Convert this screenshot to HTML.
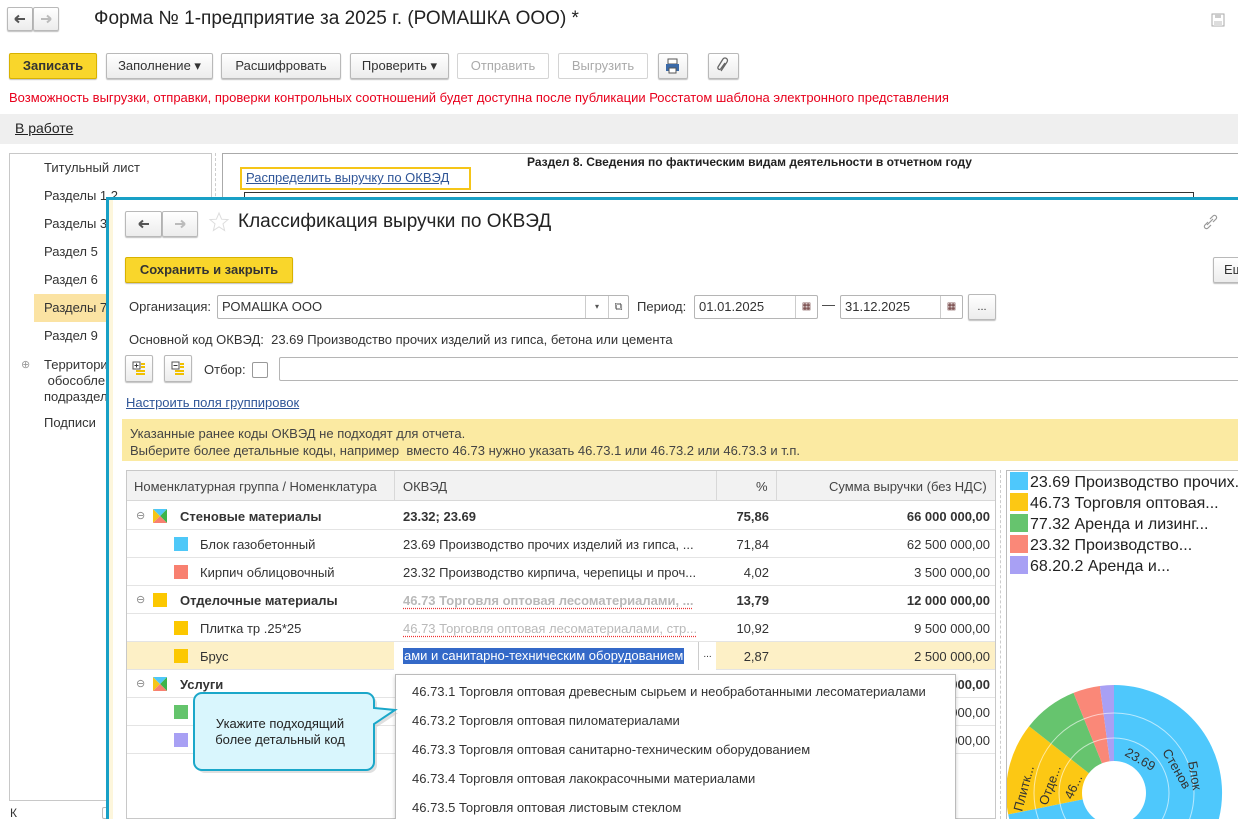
<!DOCTYPE html>
<html><head><meta charset="utf-8"><style>
*{box-sizing:border-box;margin:0;padding:0}
html,body{width:1238px;height:819px;overflow:hidden}
body{background:#fff;font-family:"Liberation Sans",Arial,sans-serif;font-size:13px;color:#333;position:relative}
.a{position:absolute;white-space:nowrap}
.btn{position:absolute;border:1px solid #b9b9b9;border-radius:2px;background:linear-gradient(#fff,#ececec);box-shadow:0 1px 1px rgba(0,0,0,.25);text-align:center;color:#333;font-size:13px}
.dis{color:#aaa;border-color:#d4d4d4;box-shadow:none;background:#fff}
.yb{background:#f9d62b;border-color:#d8b200;font-weight:bold}
.inp{position:absolute;border:1px solid #b5b5b5;border-radius:2px;background:#fff;height:24px;padding:3px 4px}
.row{position:absolute;left:127px;width:868px;height:28px;border-bottom:1px solid #e4e4e4}
.sq{position:absolute;width:14px;height:14px}
.r{text-align:right}
.b{font-weight:bold}
.gr{color:#b9b9b9;font-weight:bold;text-decoration:underline dotted #e33;text-underline-offset:3px}
</style></head><body>

<svg width="0" height="0" style="position:absolute"><defs>
<g id="la"><path d="M3 6 H13 M3 6 L7 2.5 M3 6 L7 9.5" fill="none" stroke-width="2"/></g>
<g id="ra"><path d="M13 6 H3 M13 6 L9 2.5 M13 6 L9 9.5" fill="none" stroke-width="2"/></g>
<g id="mix"><polygon points="0,0 7,7 0,14" fill="#f5c518"/><polygon points="14,0 7,7 14,14" fill="#3cb44b"/><polygon points="0,0 14,0 7,7" fill="#4ec8f8"/><polygon points="0,14 14,14 7,7" fill="#f88070"/></g>
</defs></svg>

<!-- title row -->
<div class="btn" style="left:7px;top:7px;width:26px;height:24px"><svg width="24" height="22"><use href="#la" stroke="#555" transform="translate(4,5)"/></svg></div>
<div class="btn" style="left:33px;top:7px;width:26px;height:24px"><svg width="24" height="22"><use href="#ra" stroke="#bbb" transform="translate(4,5)"/></svg></div>
<div class="a" style="left:94px;top:8px;font-size:19px;color:#222">Форма № 1-предприятие за 2025 г. (РОМАШКА ООО) *</div>
<svg class="a" style="left:1211px;top:13px" width="14" height="14"><rect x="1" y="1" width="12" height="12" fill="none" stroke="#aaa"/><rect x="4" y="1" width="6" height="4" fill="#ccc"/><rect x="3" y="8" width="8" height="5" fill="#ddd"/></svg>

<!-- toolbar -->
<div class="btn yb" style="left:9px;top:53px;width:88px;height:26px;line-height:24px">Записать</div>
<div class="btn" style="left:106px;top:53px;width:107px;height:26px;line-height:24px">Заполнение ▾</div>
<div class="btn" style="left:221px;top:53px;width:120px;height:26px;line-height:24px">Расшифровать</div>
<div class="btn" style="left:350px;top:53px;width:99px;height:26px;line-height:24px">Проверить ▾</div>
<div class="btn dis" style="left:457px;top:53px;width:92px;height:26px;line-height:24px">Отправить</div>
<div class="btn dis" style="left:558px;top:53px;width:90px;height:26px;line-height:24px">Выгрузить</div>
<div class="btn" style="left:658px;top:53px;width:30px;height:26px"><svg width="28" height="24"><rect x="9" y="5" width="9" height="5" fill="#fff" stroke="#555"/><rect x="7" y="10" width="13" height="7" fill="#3b6aa8"/><rect x="10" y="14" width="7" height="5" fill="#fff" stroke="#555"/></svg></div>
<div class="btn" style="left:708px;top:53px;width:31px;height:26px"><svg width="29" height="24"><path d="M12 17 L18 8 a2.5 2.5 0 0 0 -4 -3 L9 13 a1.5 1.5 0 0 0 3 1.5 L16 9" fill="none" stroke="#666" stroke-width="1.3"/></svg></div>

<div class="a" style="left:9px;top:90px;color:#e8001c;font-size:13px">Возможность выгрузки, отправки, проверки контрольных соотношений будет доступна после публикации Росстатом шаблона электронного представления</div>
<div class="a" style="left:0;top:114px;width:1238px;height:30px;background:#efefef"></div>
<div class="a" style="left:15px;top:120px;font-size:14px;color:#222;text-decoration:underline">В работе</div>

<!-- left panel -->
<div class="a" style="left:9px;top:153px;width:203px;height:648px;border:1px solid #c8c8c8;background:#fff"></div>
<div class="a" style="left:34px;top:294px;width:80px;height:28px;background:#fbe3a3"></div>
<div class="a" style="left:44px;top:154px;font-size:13px;line-height:28px;color:#333">Титульный лист<br>Разделы 1,2<br>Разделы 3<br>Раздел 5<br>Раздел 6<br>Разделы 7<br>Раздел 9</div>
<div class="a" style="left:21px;top:358px;color:#999;font-size:11px">⊕</div>
<div class="a" style="left:44px;top:357px;line-height:16px">Территори<br>&nbsp;обособле<br>подраздел</div>
<div class="a" style="left:44px;top:415px">Подписи</div>
<div class="a" style="left:215px;top:153px;height:660px;border-left:1px dashed #ccc"></div>
<div class="a" style="left:10px;top:806px;font-size:12px">К</div>
<div class="a" style="left:102px;top:807px;width:8px;height:12px;border:1px solid #bbb;border-radius:2px"></div>

<!-- background form -->
<div class="a" style="left:222px;top:153px;width:1016px;height:666px;border-top:1px solid #aaa;border-left:1px solid #aaa"></div>
<div class="a b" style="left:527px;top:155px;font-size:12px;color:#222">Раздел 8. Сведения по фактическим видам деятельности в отчетном году</div>
<div class="a" style="left:240px;top:167px;width:231px;height:23px;border:2px solid #f5c518"></div>
<div class="a" style="left:246px;top:170px;color:#2f5597;text-decoration:underline">Распределить выручку по ОКВЭД</div>
<div class="a" style="left:244px;top:192px;width:950px;height:8px;border:1px solid #333"></div>

<!-- modal -->
<div class="a" style="left:106px;top:197px;width:1132px;height:622px;border-top:3px solid #18a0c6;border-left:3px solid #18a0c6;background:#fff"></div>
<div class="a" style="left:109px;top:200px;width:4px;height:619px;background:#fdf6dc"></div>
<div class="btn" style="left:125px;top:211px;width:37px;height:26px"><svg width="35" height="24"><use href="#la" stroke="#555" transform="translate(10,6)"/></svg></div>
<div class="btn" style="left:162px;top:211px;width:36px;height:26px"><svg width="34" height="24"><use href="#ra" stroke="#bbb" transform="translate(9,6)"/></svg></div>
<svg class="a" style="left:208px;top:211px" width="22" height="22"><path d="M11 2 L13.6 8.2 L20 8.6 L15 12.8 L16.6 19.5 L11 15.8 L5.4 19.5 L7 12.8 L2 8.6 L8.4 8.2 Z" fill="none" stroke="#ddd"/></svg>
<div class="a" style="left:238px;top:211px;font-size:19px;color:#222">Классификация выручки по ОКВЭД</div>
<svg class="a" style="left:1202px;top:214px" width="16" height="16"><path d="M5 11 L11 5 M6 8 L3 11 a2 2 0 0 0 3 3 L9 11 M8 5 L11 2 a2 2 0 0 1 3 3 L11 8" fill="none" stroke="#999" stroke-width="1.2"/></svg>

<div class="btn yb" style="left:125px;top:257px;width:168px;height:26px;line-height:24px">Сохранить и закрыть</div>
<div class="btn" style="left:1213px;top:257px;width:30px;height:26px;line-height:24px;text-align:left;padding-left:10px">Ещ</div>

<div class="a" style="left:129px;top:299px">Организация:</div>
<div class="inp" style="left:217px;top:295px;width:412px">РОМАШКА ООО</div>
<div class="a" style="left:585px;top:296px;height:22px;border-left:1px solid #ccc;width:23px;text-align:center;font-size:8px;line-height:22px;color:#555">▾</div>
<div class="a" style="left:608px;top:296px;height:22px;border-left:1px solid #ccc;width:20px;text-align:center;font-size:11px;line-height:22px;color:#555">⧉</div>
<div class="a" style="left:637px;top:299px">Период:</div>
<div class="inp" style="left:694px;top:295px;width:124px">01.01.2025</div>
<div class="a" style="left:795px;top:296px;height:22px;border-left:1px solid #ccc;width:22px;text-align:center;line-height:22px;font-size:10px;color:#633">▦</div>
<div class="a" style="left:822px;top:297px">—</div>
<div class="inp" style="left:840px;top:295px;width:123px">31.12.2025</div>
<div class="a" style="left:940px;top:296px;height:22px;border-left:1px solid #ccc;width:22px;text-align:center;line-height:22px;font-size:10px;color:#633">▦</div>
<div class="btn" style="left:968px;top:294px;width:28px;height:26px;line-height:24px;font-size:11px">...</div>

<div class="a" style="left:129px;top:332px">Основной код ОКВЭД:&nbsp; 23.69 Производство прочих изделий из гипса, бетона или цемента</div>

<div class="btn" style="left:125px;top:355px;width:28px;height:27px"><svg width="26" height="25"><rect x="7" y="6" width="7" height="7" fill="#fff" stroke="#555"/><path d="M8.5 9.5h4M10.5 7.5v4" stroke="#333"/><path d="M15 8h4M15 11h4M10 15h9M10 18h9" stroke="#f0c000" stroke-width="2"/></svg></div>
<div class="btn" style="left:164px;top:355px;width:28px;height:27px"><svg width="26" height="25"><rect x="7" y="6" width="7" height="7" fill="#fff" stroke="#555"/><path d="M8.5 9.5h4" stroke="#333"/><path d="M15 8h4M15 11h4M10 15h9M10 18h9" stroke="#f0c000" stroke-width="2"/></svg></div>
<div class="a" style="left:204px;top:362px">Отбор:</div>
<div class="a" style="left:252px;top:362px;width:16px;height:16px;border:1px solid #999;border-radius:2px"></div>
<div class="inp" style="left:279px;top:357px;width:970px"></div>

<div class="a" style="left:126px;top:395px;color:#2f5597;text-decoration:underline">Настроить поля группировок</div>

<div class="a" style="left:122px;top:419px;width:1116px;height:42px;background:#fbeaa2"></div>
<div class="a" style="left:130px;top:425px;line-height:17px;color:#444">Указанные ранее коды ОКВЭД не подходят для отчета.<br>Выберите более детальные коды, например&nbsp; вместо 46.73 нужно указать 46.73.1 или 46.73.2 или 46.73.3 и т.п.</div>

<!-- table -->
<div class="a" style="left:126px;top:470px;width:870px;height:349px;border:1px solid #c8c8c8"></div>
<div class="a" style="left:127px;top:471px;width:868px;height:30px;background:#f2f2f2;border-bottom:1px solid #d8d8d8"></div>
<div class="a" style="left:394px;top:471px;height:30px;border-left:1px solid #d8d8d8"></div>
<div class="a" style="left:716px;top:471px;height:30px;border-left:1px solid #d8d8d8"></div>
<div class="a" style="left:776px;top:471px;height:30px;border-left:1px solid #d8d8d8"></div>
<div class="a" style="left:134px;top:479px;color:#444">Номенклатурная группа / Номенклатура</div>
<div class="a" style="left:403px;top:479px;color:#444">ОКВЭД</div>
<div class="a" style="left:756px;top:479px;color:#444">%</div>
<div class="a" style="left:829px;top:479px;color:#444">Сумма выручки (без НДС)</div>

<div class="row" style="top:502px"></div>
<div class="a" style="left:136px;top:509px;color:#888;font-size:11px">⊖</div>
<svg class="a" style="left:153px;top:509px" width="14" height="14"><use href="#mix"/></svg>
<div class="a b" style="left:180px;top:509px;color:#333">Стеновые материалы</div>
<div class="a b" style="left:403px;top:509px">23.32; 23.69</div>
<div class="a b r" style="left:716px;top:509px;width:53px">75,86</div>
<div class="a b r" style="left:776px;top:509px;width:214px">66 000 000,00</div>

<div class="row" style="top:530px"></div>
<div class="sq" style="left:174px;top:537px;background:#4ec8f8"></div>
<div class="a" style="left:200px;top:537px">Блок газобетонный</div>
<div class="a" style="left:403px;top:537px">23.69 Производство прочих изделий из гипса, ...</div>
<div class="a r" style="left:716px;top:537px;width:53px">71,84</div>
<div class="a r" style="left:776px;top:537px;width:214px">62 500 000,00</div>

<div class="row" style="top:558px"></div>
<div class="sq" style="left:174px;top:565px;background:#f88070"></div>
<div class="a" style="left:200px;top:565px">Кирпич облицовочный</div>
<div class="a" style="left:403px;top:565px">23.32 Производство кирпича, черепицы и проч...</div>
<div class="a r" style="left:716px;top:565px;width:53px">4,02</div>
<div class="a r" style="left:776px;top:565px;width:214px">3 500 000,00</div>

<div class="row" style="top:586px"></div>
<div class="a" style="left:136px;top:593px;color:#888;font-size:11px">⊖</div>
<div class="sq" style="left:153px;top:593px;background:#fcc800"></div>
<div class="a b" style="left:180px;top:593px">Отделочные материалы</div>
<div class="a gr" style="left:403px;top:593px">46.73 Торговля оптовая лесоматериалами, ...</div>
<div class="a b r" style="left:716px;top:593px;width:53px">13,79</div>
<div class="a b r" style="left:776px;top:593px;width:214px">12 000 000,00</div>

<div class="row" style="top:614px"></div>
<div class="sq" style="left:174px;top:621px;background:#fcc800"></div>
<div class="a" style="left:200px;top:621px">Плитка тр .25*25</div>
<div class="a gr" style="left:403px;top:621px;font-weight:normal">46.73 Торговля оптовая лесоматериалами, стр...</div>
<div class="a r" style="left:716px;top:621px;width:53px">10,92</div>
<div class="a r" style="left:776px;top:621px;width:214px">9 500 000,00</div>

<div class="row" style="top:642px;background:#fdf0c6"></div>
<div class="a" style="left:394px;top:642px;width:322px;height:28px;background:#fff"></div>
<div class="sq" style="left:174px;top:649px;background:#fcc800"></div>
<div class="a" style="left:200px;top:649px">Брус</div>
<div class="a" style="left:403px;top:648px;background:#3469c8;color:#fff;padding:0 1px;line-height:16px">ами и санитарно-техническим оборудованием</div>
<div class="a" style="left:698px;top:642px;height:28px;border-left:1px solid #ccc;width:18px;text-align:center;line-height:26px;font-size:10px">...</div>
<div class="a r" style="left:716px;top:649px;width:53px">2,87</div>
<div class="a r" style="left:776px;top:649px;width:214px">2 500 000,00</div>

<div class="row" style="top:670px"></div>
<div class="a" style="left:136px;top:677px;color:#888;font-size:11px">⊖</div>
<svg class="a" style="left:153px;top:677px" width="14" height="14"><use href="#mix"/></svg>
<div class="a b" style="left:180px;top:677px">Услуги</div>
<div class="a b r" style="left:776px;top:677px;width:214px">66 000 000,00</div>

<div class="row" style="top:698px"></div>
<div class="sq" style="left:174px;top:705px;background:#64c46c"></div>
<div class="a r" style="left:776px;top:705px;width:214px">3 000 000,00</div>
<div class="row" style="top:726px"></div>
<div class="sq" style="left:174px;top:733px;background:#a8a0f4"></div>
<div class="a r" style="left:776px;top:733px;width:214px">2 000 000,00</div>

<!-- dropdown -->
<div class="a" style="left:395px;top:674px;width:561px;height:145px;background:#fff;border:1px solid #bbb;border-bottom:none;box-shadow:0 2px 4px rgba(0,0,0,.2);overflow:hidden">
<div style="position:absolute;left:16px;top:2px;line-height:29px;color:#333;white-space:nowrap">46.73.1 Торговля оптовая древесным сырьем и необработанными лесоматериалами<br>46.73.2 Торговля оптовая пиломатериалами<br>46.73.3 Торговля оптовая санитарно-техническим оборудованием<br>46.73.4 Торговля оптовая лакокрасочными материалами<br>46.73.5 Торговля оптовая листовым стеклом</div>
</div>

<!-- callout -->
<svg class="a" style="left:188px;top:688px" width="212" height="92">
<path d="M14 5 H178 a8 8 0 0 1 8 8 V20 L207 22 L186 36 V74 a8 8 0 0 1 -8 8 H14 a8 8 0 0 1 -8 -8 V13 a8 8 0 0 1 8 -8 Z" fill="#c0c0c0" opacity=".5" transform="translate(3,3)"/>
<path d="M14 5 H178 a8 8 0 0 1 8 8 V20 L207 22 L186 36 V74 a8 8 0 0 1 -8 8 H14 a8 8 0 0 1 -8 -8 V13 a8 8 0 0 1 8 -8 Z" fill="#d9f6fd" stroke="#1aa7c9" stroke-width="2"/>
</svg>
<div class="a" style="left:194px;top:716px;width:172px;text-align:center;line-height:16px;font-size:13px;color:#222">Укажите подходящий<br>более детальный код</div>

<!-- chart panel -->
<div class="a" style="left:1000px;top:470px;height:349px;border-left:1px dashed #ccc"></div>
<div class="a" style="left:1006px;top:470px;width:232px;height:349px;border:1px solid #bbb;border-right:none;border-bottom:none;overflow:hidden;background:#fff">
<svg width="240" height="349" style="position:absolute;left:0;top:0">
<g transform="translate(-1007,-471)">
<path d="M1114 793 L1114 685 A108 108 0 1 1 1008.2 814.4 Z" fill="#4ec8fc"/>
<path d="M1114 793 L1008.2 814.4 A108 108 0 0 1 1029.1 726.2 Z" fill="#fcc814"/>
<path d="M1114 793 L1029.1 726.2 A108 108 0 0 1 1073.5 692.9 Z" fill="#66c46e"/>
<path d="M1114 793 L1073.5 692.9 A108 108 0 0 1 1099.9 686 Z" fill="#fa8878"/>
<path d="M1114 793 L1099.9 686 A108 108 0 0 1 1114 685 Z" fill="#a8a0f4"/>
<circle cx="1114" cy="793" r="55" fill="none" stroke="#fff" stroke-opacity=".6"/>
<circle cx="1114" cy="793" r="80" fill="none" stroke="#fff" stroke-opacity=".6"/>
<circle cx="1114" cy="793" r="32" fill="#fff"/>
<text x="1124" y="755" font-size="13" fill="#333" transform="rotate(30 1124 755)">23.69</text>
<text x="1162" y="752" font-size="13" fill="#333" transform="rotate(60 1162 752)">Стенов</text>
<text x="1188" y="762" font-size="13" fill="#333" transform="rotate(80 1188 762)">Блок</text>
<text x="1022" y="812" font-size="13" fill="#333" transform="rotate(-75 1022 812)">Плитк...</text>
<text x="1047" y="806" font-size="13" fill="#333" transform="rotate(-70 1047 806)">Отде...</text>
<text x="1072" y="800" font-size="13" fill="#333" transform="rotate(-65 1072 800)">46...</text>
</g>
</svg>
<div style="position:absolute;left:3px;top:1px;font-size:16px;line-height:20px;color:#222;white-space:nowrap">
<div><span style="display:inline-block;width:18px;height:18px;background:#4ec8fc;vertical-align:-3px;margin-right:2px"></span>23.69 Производство прочих...</div>
<div><span style="display:inline-block;width:18px;height:18px;background:#fcc814;vertical-align:-3px;margin-right:2px"></span>46.73 Торговля оптовая...</div>
<div><span style="display:inline-block;width:18px;height:18px;background:#66c46e;vertical-align:-3px;margin-right:2px"></span>77.32 Аренда и лизинг...</div>
<div><span style="display:inline-block;width:18px;height:18px;background:#fa8878;vertical-align:-3px;margin-right:2px"></span>23.32 Производство...</div>
<div><span style="display:inline-block;width:18px;height:18px;background:#a8a0f4;vertical-align:-3px;margin-right:2px"></span>68.20.2 Аренда и...</div>
</div>
</div>

</body></html>
